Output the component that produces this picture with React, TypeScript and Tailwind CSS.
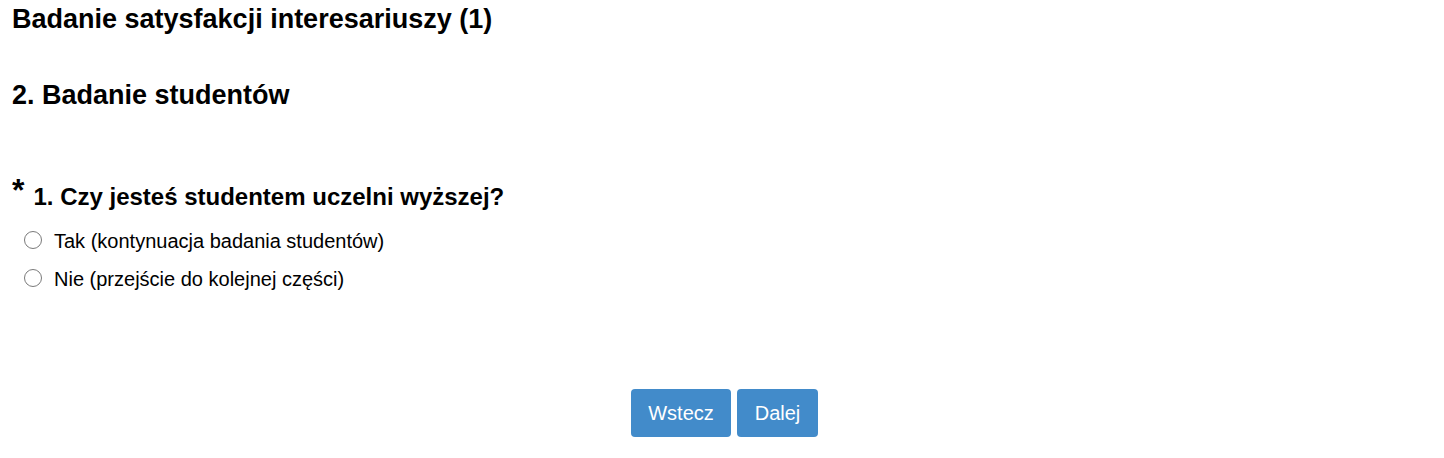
import React from "react";

export default function App() {
  const options = [
    "Tak (kontynuacja badania studentów)",
    "Nie (przejście do kolejnej części)",
  ];
  return (
    <div className="w-[1444px] h-[458px] bg-white text-black font-['Liberation_Sans',Arial,sans-serif]">
      <div className="px-3">
        <h1 className="pt-[3px] text-[27px] leading-[32px] font-bold">
          Badanie satysfakcji interesariuszy (1)
        </h1>
        <h2 className="mt-[44px] text-[27px] leading-[32px] font-bold">
          2. Badanie studentów
        </h2>
        <div className="mt-[63px] flex items-start">
          <span className="text-[32px] leading-[32px] font-bold">*</span>
          <span className="ml-[9px] mt-[9px] text-[24px] leading-[28px] font-bold">
            1. Czy jesteś studentem uczelni wyższej?
          </span>
        </div>
        <div className="mt-[18px] flex flex-col gap-[14px] pl-[12px]">
          {options.map((o) => (
            <label key={o} className="flex items-center gap-[12px] text-[20px] leading-[24px]">
              <span className="w-[18px] h-[18px] -mt-[3px] rounded-full border-[1.5px] border-[#7a7a7a] bg-white shrink-0" />
              <span>{o}</span>
            </label>
          ))}
        </div>
      </div>
      <div className="mt-[98px] flex justify-center gap-[6px] pl-[5px]">
        <button className="w-[100px] h-[48px] rounded-[4px] bg-[#428bca] text-white text-[20px]">
          Wstecz
        </button>
        <button className="w-[81px] h-[48px] rounded-[4px] bg-[#428bca] text-white text-[20px]">
          Dalej
        </button>
      </div>
    </div>
  );
}
